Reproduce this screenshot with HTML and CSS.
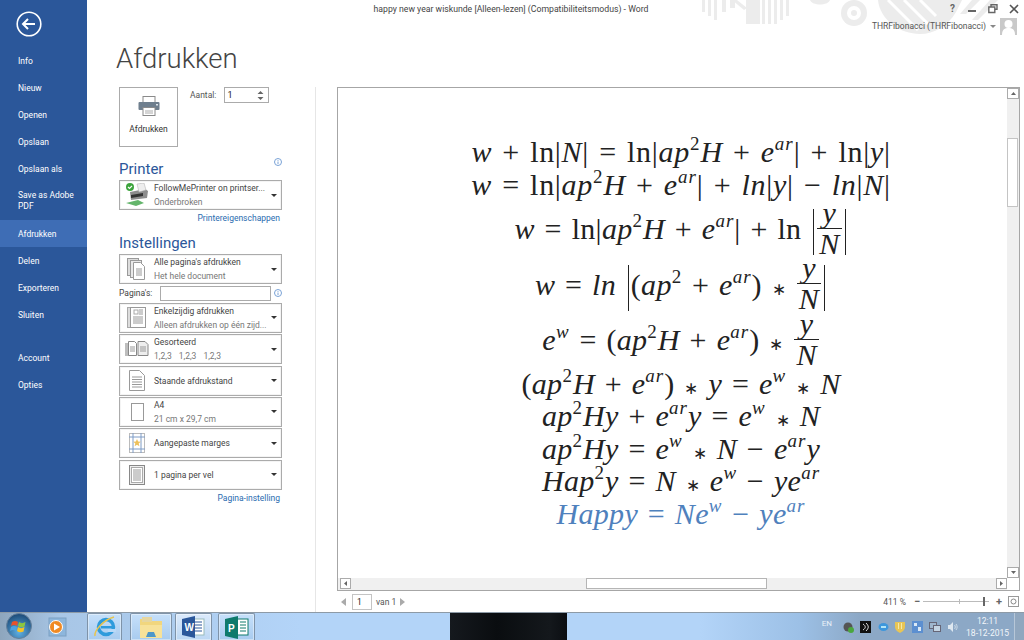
FILE: index.html
```html
<!DOCTYPE html>
<html lang="nl">
<head>
<meta charset="utf-8">
<title>happy new year wiskunde</title>
<link rel="stylesheet" href="styles.css">
</head>
<body>
<div class="window">
  <header class="titlebar">
    <svg class="decor" width="324" height="45" viewBox="0 0 324 45">
      <g fill="#ececec">
        <rect x="2" y="0" width="3" height="12"/><rect x="8" y="0" width="3" height="16"/><rect x="14" y="0" width="3" height="20"/>
        <rect x="22" y="0" width="4" height="12"/><rect x="30" y="0" width="5" height="8"/>
        <path d="M32 0h5l10 8-3 2z"/>
        <rect x="46" y="0" width="14" height="24"/><rect x="62" y="0" width="3" height="24"/><rect x="68" y="0" width="3" height="24"/><rect x="74" y="0" width="3" height="24"/><rect x="80" y="0" width="3" height="20"/><rect x="86" y="0" width="3" height="16"/>
        <path d="M110 0h20c-2 6-18 6-20 0z"/>
        <circle cx="154" cy="13" r="13"/>
        <path d="M178 0h84l-6 12c-8 14-22 22-36 22-20 0-40-14-42-34z"/>
        <path d="M272 0h8l-14 14h-6zM290 0h8l-20 20h-6z"/>
      </g>
      <circle cx="154" cy="13" r="7" fill="#fff"/><circle cx="154" cy="13" r="3" fill="#ececec"/>
      <path d="M188 0l30 30M204 0l24 24M220 0l16 16" stroke="#fff" stroke-width="3"/>
    </svg>
    <div class="doc-title">happy new year wiskunde [Alleen-lezen] (Compatibiliteitsmodus) - Word</div>
    <div class="win-controls">
      <span class="help">?</span>
      <svg width="10" height="10" viewBox="0 0 10 10"><rect x="1" y="6" width="8" height="2" fill="#666"/></svg>
      <svg width="10" height="10" viewBox="0 0 10 10"><path d="M3 2.500V.8h6v4.500H7.500M.8 3h6v5.500h-6z" fill="none" stroke="#666" stroke-width="1.400"/></svg>
      <svg width="10" height="10" viewBox="0 0 10 10"><path d="M1 1l8 8M9 1l-8 8" stroke="#555" stroke-width="1.600"/></svg>
    </div>
    <div class="account">
      <span>THRFibonacci (THRFibonacci)</span>
      <svg width="6" height="4" viewBox="0 0 6 4"><path d="M0 0h6L3 3z" fill="#888"/></svg>
      <svg width="17" height="17" viewBox="0 0 17 17"><rect width="17" height="17" fill="#c9c9c9"/><circle cx="8.500" cy="6" r="4" fill="#fff"/><path d="M2 17c0-6 3-7 6.500-7s6.500 1 6.500 7z" fill="#fff"/></svg>
    </div>
  </header>

  <div class="workarea">
    <nav class="sidebar">
      <svg class="back" width="26" height="26" viewBox="0 0 26 26"><circle cx="13" cy="13" r="11.800" fill="none" stroke="#fff" stroke-width="1.600"/><path d="M7 13h12M12 8l-5 5 5 5" fill="none" stroke="#fff" stroke-width="2"/></svg>
      <a class="nav-item">Info</a>
      <a class="nav-item">Nieuw</a>
      <a class="nav-item">Openen</a>
      <a class="nav-item">Opslaan</a>
      <a class="nav-item">Opslaan als</a>
      <a class="nav-item nav-double">Save as Adobe<br>PDF</a>
      <a class="nav-item nav-active">Afdrukken</a>
      <a class="nav-item">Delen</a>
      <a class="nav-item">Exporteren</a>
      <a class="nav-item">Sluiten</a>
      <a class="nav-item nav-gap">Account</a>
      <a class="nav-item">Opties</a>
    </nav>

    <main class="backstage">
      <h1 class="page-title">Afdrukken</h1>
      <div class="print-view">
        <section class="settings">
          <div class="print-top">
            <button class="print-btn">
              <svg width="22" height="20" viewBox="0 0 22 20"><rect x="5" y="0.500" width="12" height="7" fill="#fff" stroke="#8a8a8a"/><rect x="0.500" y="6" width="21" height="8" rx="1" fill="#6f7f8e"/><rect x="5" y="11.500" width="12" height="8" fill="#fff" stroke="#8a8a8a"/><path d="M7 15h8M7 17h8" stroke="#aaa"/><rect x="18" y="8" width="2" height="1.500" fill="#dfe6ec"/></svg>
              <span>Afdrukken</span>
            </button>
            <label class="copies">Aantal:
              <span class="spin"><span>1</span><svg width="7" height="11" viewBox="0 0 7 11"><path d="M0.500 4L3.500 1l3 3zM0.500 7l3 3 3-3z" fill="#666"/></svg></span>
            </label>
          </div>

          <div class="section-head"><h2>Printer</h2>
            <svg class="info info-head" width="8" height="8" viewBox="0 0 8 8"><circle cx="4" cy="4" r="3.500" fill="none" stroke="#7aa2d6"/><path d="M4 2v.8M4 3.500V6" stroke="#7aa2d6"/></svg>
          </div>
          <div class="dropdown">
            <span class="dd-icon">
              <svg width="24" height="24" viewBox="0 0 24 24"><path d="M5 9l15-3 3 2-1 7-16 2z" fill="#8d8d8d"/><path d="M12 1l7-1 2 7-7 2z" fill="#eee" stroke="#aaa" stroke-width=".5"/><path d="M6 12l12-2v3L6 15z" fill="#333"/><path d="M1 20l12-3 6 3-8 3z" fill="#63b56b"/><circle cx="5" cy="4" r="4" fill="#3da43d"/><path d="M3 4l1.500 1.500L7 2.800" fill="none" stroke="#fff" stroke-width="1.200"/></svg>
            </span>
            <span class="dd-text"><span class="dd-main">FollowMePrinter on printser...</span><span class="dd-sub">Onderbroken</span></span>
            <span class="caret"></span>
          </div>
          <a class="link">Printereigenschappen</a>

          <h2 class="settings-head">Instellingen</h2>
          <div class="dd-stack">
            <div class="dropdown">
              <span class="dd-icon"><svg width="20" height="22" viewBox="0 0 20 22"><g fill="#fff" stroke="#9a9a9a"><rect x=".5" y=".5" width="11" height="17" fill="#ddd"/><rect x="3.500" y="2.500" width="11" height="17" fill="#e9e9e9"/><path d="M6.500 4.500h7l4 4v13h-11z"/></g><path d="M9 11h6M9 13h6M9 15h6M9 17h6" stroke="#999"/></svg></span>
              <span class="dd-text"><span class="dd-main">Alle pagina's afdrukken</span><span class="dd-sub">Het hele document</span></span>
              <span class="caret"></span>
            </div>
            <div class="pages-row">
              <label>Pagina's:</label><span class="pages-input"></span>
              <svg class="info" width="8" height="8" viewBox="0 0 8 8"><circle cx="4" cy="4" r="3.500" fill="none" stroke="#7aa2d6"/><path d="M4 2v.8M4 3.500V6" stroke="#7aa2d6"/></svg>
            </div>
            <div class="dropdown">
              <span class="dd-icon"><svg width="20" height="22" viewBox="0 0 20 22"><rect x=".5" y=".5" width="3" height="20" fill="#ddd" stroke="#aaa"/><rect x="3.500" y=".5" width="15" height="20" fill="#fff" stroke="#999"/><rect x="7" y="3" width="4" height="4" fill="none" stroke="#aaa"/><path d="M12 3h4M12 5h4M12 7h4M6 10h10M6 12h10M6 14h10M6 16h10" stroke="#999"/></svg></span>
              <span class="dd-text"><span class="dd-main">Enkelzijdig afdrukken</span><span class="dd-sub">Alleen afdrukken op één zijd...</span></span>
              <span class="caret"></span>
            </div>
            <div class="dropdown">
              <span class="dd-icon"><svg width="24" height="16" viewBox="0 0 24 16"><path d="M0 2h9v13H0z" fill="#bdbdbd"/><g fill="#fff" stroke="#888"><path d="M3.500 .5h6l2 2v12h-8z"/><path d="M13 .5h7l3 3v11H13z" fill="#eee"/></g><path d="M5 6h5M5 8h5M5 10h5M15 6h6M15 8h6M15 10h6" stroke="#999"/></svg></span>
              <span class="dd-text"><span class="dd-main">Gesorteerd</span><span class="dd-sub dd-collate"><span>1,2,3</span><span>1,2,3</span><span>1,2,3</span></span></span>
              <span class="caret"></span>
            </div>
            <div class="dropdown">
              <span class="dd-icon"><svg width="16" height="21" viewBox="0 0 16 21"><path d="M.5 .5h10l5 5v15H.5z" fill="#fff" stroke="#999"/><path d="M3 7h10M3 9.500h10M3 12h10M3 14.500h10M3 17h10" stroke="#999"/></svg></span>
              <span class="dd-text"><span class="dd-main">Staande afdrukstand</span></span>
              <span class="caret"></span>
            </div>
            <div class="dropdown">
              <span class="dd-icon"><svg width="13" height="18" viewBox="0 0 13 18"><rect x=".5" y=".5" width="12" height="17" fill="#fff" stroke="#999"/></svg></span>
              <span class="dd-text"><span class="dd-main">A4</span><span class="dd-sub">21 cm x 29,7 cm</span></span>
              <span class="caret"></span>
            </div>
            <div class="dropdown">
              <span class="dd-icon"><svg width="16" height="20" viewBox="0 0 16 20"><rect x=".5" y=".5" width="15" height="19" fill="#fff" stroke="#bbb"/><path d="M4 0v20M12 0v20M0 4h16M0 16h16" stroke="#7e9cc6"/><path d="M8 6l1.100 2.600 2.700.2-2.100 1.800.7 2.700L8 11.800l-2.400 1.500.7-2.700-2.100-1.800 2.700-.2z" fill="#eec15c"/></svg></span>
              <span class="dd-text"><span class="dd-main">Aangepaste marges</span></span>
              <span class="caret"></span>
            </div>
            <div class="dropdown">
              <span class="dd-icon"><svg width="16" height="20" viewBox="0 0 16 20"><rect x=".5" y=".5" width="15" height="19" fill="#eee" stroke="#888"/><rect x="2.500" y="2.500" width="11" height="15" fill="#fff" stroke="#aaa"/><path d="M4 5h8M4 7h8M4 9h8M4 11h8M4 13h8M4 15h8" stroke="#999"/></svg></span>
              <span class="dd-text"><span class="dd-main">1 pagina per vel</span></span>
              <span class="caret"></span>
            </div>
          </div>
          <a class="link">Pagina-instelling</a>
        </section>

        <section class="preview">
          <div class="panel">
            <div class="page">
              <div class="eq eq-wide"><i>w</i> + ln|<i>N</i>| = ln|<i>ap</i><sup>2</sup><i>H</i> + <i>e<sup>ar</sup></i>| + ln|<i>y</i>|</div>
              <div class="eq eq-wide"><i>w</i> = ln|<i>ap</i><sup>2</sup><i>H</i> + <i>e<sup>ar</sup></i>| + <i>ln</i>|<i>y</i>| − <i>ln</i>|<i>N</i>|</div>
              <div class="eq eq-tall"><i>w</i> = ln|<i>ap</i><sup>2</sup><i>H</i> + <i>e<sup>ar</sup></i>| + ln <span class="tall-bar"></span><span class="frac"><i>y</i><i class="den">N</i></span><span class="tall-bar"></span></div>
              <div class="eq eq-tall"><i>w</i> = <i>ln</i> <span class="tall-bar"></span>(<i>ap</i><sup>2</sup> + <i>e<sup>ar</sup></i>) <span class="star">∗</span> <span class="frac"><i>y</i><i class="den">N</i></span><span class="tall-bar"></span></div>
              <div class="eq eq-tall"><i>e<sup>w</sup></i> = (<i>ap</i><sup>2</sup><i>H</i> + <i>e<sup>ar</sup></i>) <span class="star">∗</span> <span class="frac"><i>y</i><i class="den">N</i></span></div>
              <div class="eq">(<i>ap</i><sup>2</sup><i>H</i> + <i>e<sup>ar</sup></i>) <span class="star">∗</span> <i>y</i> = <i>e<sup>w</sup></i> <span class="star">∗</span> <i>N</i></div>
              <div class="eq"><i>ap</i><sup>2</sup><i>Hy</i> + <i>e<sup>ar</sup>y</i> = <i>e<sup>w</sup></i> <span class="star">∗</span> <i>N</i></div>
              <div class="eq"><i>ap</i><sup>2</sup><i>Hy</i> = <i>e<sup>w</sup></i> <span class="star">∗</span> <i>N</i> − <i>e<sup>ar</sup>y</i></div>
              <div class="eq"><i>Hap</i><sup>2</sup><i>y</i> = <i>N</i> <span class="star">∗</span> <i>e<sup>w</sup></i> − <i>ye<sup>ar</sup></i></div>
              <div class="eq eq-blue"><i>Happy</i> = <i>Ne<sup>w</sup></i> − <i>ye<sup>ar</sup></i></div>
            </div>
            <div class="vscroll">
              <span class="sb-btn"><svg width="5" height="3" viewBox="0 0 5 3"><path d="M0 3L2.500 0 5 3z" fill="#666"/></svg></span>
              <span class="vtrack"><span class="vthumb"></span></span>
              <span class="sb-btn"><svg width="5" height="3" viewBox="0 0 5 3"><path d="M0 0l2.500 3L5 0z" fill="#666"/></svg></span>
            </div>
            <div class="hscroll">
              <span class="sb-btn"><svg width="3" height="5" viewBox="0 0 3 5"><path d="M3 0L0 2.500 3 5z" fill="#666"/></svg></span>
              <span class="htrack"><span class="hthumb"></span></span>
              <span class="sb-btn"><svg width="3" height="5" viewBox="0 0 3 5"><path d="M0 0l3 2.500L0 5z" fill="#666"/></svg></span>
            </div>
          </div>
          <div class="statusbar">
            <div class="pager">
              <svg width="5" height="8" viewBox="0 0 5 8"><path d="M5 0L0 4l5 4z" fill="#aaa"/></svg>
              <span class="page-box">1</span><span>van 1</span>
              <svg width="5" height="8" viewBox="0 0 5 8"><path d="M0 0l5 4-5 4z" fill="#aaa"/></svg>
            </div>
            <div class="zoom">
              <span class="zoom-pct">411 %</span>
              <span class="zoom-op">−</span>
              <span class="slider"><span class="mid-tick"></span><span class="knob"></span></span>
              <span class="zoom-op zoom-plus">+</span>
              <svg class="zoom-fit" width="11" height="11" viewBox="0 0 11 11"><rect x=".5" y=".5" width="10" height="10" fill="#fff" stroke="#999"/><circle cx="5.500" cy="5.500" r="2.500" fill="none" stroke="#888"/></svg>
            </div>
          </div>
        </section>
      </div>
    </main>
  </div>

  <footer class="taskbar">
    <svg class="orb" width="26" height="26" viewBox="0 0 26 26">
      <defs><radialGradient id="orbfill" cx=".5" cy=".75" r=".7"><stop offset="0" stop-color="#5fb0e4"/><stop offset="1" stop-color="#1f4f7d"/></radialGradient></defs>
      <circle cx="13" cy="13" r="12.500" fill="url(#orbfill)" stroke="#66809a"/>
      <path d="M6 9c2-1.500 4-1.500 6 0l-1 4c-2-1.500-4-1.500-6 0z" fill="#e8532b"/>
      <path d="M13 9c2 1.500 4 1.500 6.500 0l-1 4.500c-2 1-4.500 1-6.500-.5z" fill="#8cc63f"/>
      <path d="M5 14c2-1.500 4-1.500 6 0l-1 4c-2-1.500-4-1.500-6 0z" fill="#4ba3e3"/>
      <path d="M12 14c2 1.500 4 1.500 6.500 0l-1 4.500c-2 1-4.500 1-6.500-.5z" fill="#f7c325"/>
    </svg>
    <svg class="tb-media" width="19" height="20" viewBox="0 0 19 20"><rect x="1" y="1" width="17" height="18" fill="#8db6dc" stroke="#7da0c2"/><circle cx="8" cy="10" r="6.500" fill="#f08a24" stroke="#fff"/><path d="M6 6.500l6 3.500-6 3.500z" fill="#fff"/></svg>
    <div class="tb-btn tb-ie">
      <svg width="24" height="24" viewBox="0 0 24 24"><circle cx="13" cy="12" r="7.500" fill="none" stroke="#2f9bdc" stroke-width="3.500"/><rect x="8" y="11" width="11" height="2.500" fill="#2f9bdc"/><rect x="15" y="14" width="8" height="3" fill="#b9d9f7"/><path d="M2 21C1 16 10 5 21 2" fill="none" stroke="#e8c44a" stroke-width="1.500"/></svg>
    </div>
    <div class="tb-btn tb-explorer">
      <svg width="24" height="23" viewBox="0 0 24 23"><path d="M1 3h8l2 2h12v16H1z" fill="#f1d67e"/><rect x="3" y="1" width="10" height="5" fill="#e6d6a0"/><rect x="1" y="9" width="22" height="13" fill="#f7e29a"/><path d="M7 21l2-5h6l2 5z" fill="#4d97c9"/></svg>
    </div>
    <div class="tb-btn tb-word">
      <svg width="23" height="22" viewBox="0 0 23 22"><rect x="9" y="3" width="13" height="16" fill="#fff" stroke="#9bb"/><path d="M12 6h8M12 9h8M12 12h8M12 15h8" stroke="#2b579a"/><path d="M0 3l13-3v22L0 19z" fill="#2b579a"/><text x="2.500" y="14.500" class="tb-letter">W</text></svg>
    </div>
    <div class="tb-btn tb-pub">
      <svg width="24" height="23" viewBox="0 0 24 23"><rect x="12" y="3" width="11" height="16" fill="#fff" stroke="#0f7a6c"/><path d="M15 6h6M15 9h6M15 12h6M15 15h6" stroke="#0f7a6c"/><path d="M0 3l13-3v23L0 20z" fill="#0f7a6c"/><text x="3" y="15.500" class="tb-letter">P</text></svg>
    </div>
    <div class="tb-dark"></div>
    <div class="tray">
      <span class="lang">EN</span>
      <svg width="11" height="12" viewBox="0 0 11 12"><circle cx="5" cy="6" r="4.500" fill="#555"/><circle cx="8" cy="9" r="3" fill="#4aa63e"/></svg>
      <svg width="11" height="12" viewBox="0 0 11 12"><rect width="11" height="12" fill="#111"/><path d="M3 3c3 2 3 4 0 6M6 2c3 3 3 5 0 8" fill="none" stroke="#ddd"/></svg>
      <svg width="11" height="10" viewBox="0 0 11 10"><ellipse cx="5.500" cy="5" rx="5" ry="4" fill="#3d97dc"/><path d="M3 5h5" stroke="#dff" stroke-width="1.500"/></svg>
      <svg width="10" height="12" viewBox="0 0 10 12"><path d="M0 1h10v5c0 3-3 5-5 6-2-1-5-3-5-6z" fill="#e8c556"/><path d="M3.500 2v6M6.500 2v6" stroke="#f5e9a8"/></svg>
      <svg width="11" height="12" viewBox="0 0 11 12"><rect width="11" height="12" fill="#5c8fd0"/><path d="M2 2h3v3H2zM6 6h3v4H6z" fill="#dbe9f7"/></svg>
      <svg width="12" height="10" viewBox="0 0 12 10"><rect x=".5" y=".5" width="7" height="6" fill="#9fb6cd" stroke="#667"/><rect x="4.500" y="3.500" width="7" height="6" fill="#c4d4e3" stroke="#667"/></svg>
      <svg width="10" height="10" viewBox="0 0 10 10"><path d="M0 3h2l3-3v10L2 7H0z" fill="#dde7f0"/><path d="M6.500 3c1 1 1 3 0 4M8 2c1.500 2 1.500 4 0 6" fill="none" stroke="#dde7f0" stroke-width=".8"/></svg>
      <div class="clock"><span>12:11</span><span>18-12-2015</span></div>
      <span class="show-desktop"></span>
    </div>
  </footer>
</div>
</body>
</html>
```

FILE: styles.css
```css
* { box-sizing: border-box; }
html, body { margin: 0; padding: 0; }
body { width: 1024px; height: 640px; overflow: hidden; background: #fff; font-family: Roboto, "Liberation Sans", sans-serif; font-size: 8.500px; color: #444; }
.window { position: relative; width: 1024px; height: 640px; display: flex; flex-direction: column; }

/* title bar overlay */
.titlebar { position: absolute; inset: 0 0 auto 0; height: 45px; z-index: 2; pointer-events: none; }
.decor { position: absolute; top: 0; left: 700px; }
.doc-title { position: absolute; top: 3px; left: 0; width: 1022px; text-align: center; font-size: 8.700px; line-height: 12px; color: #444; }
.win-controls { position: absolute; top: 3px; right: 5px; display: flex; align-items: center; gap: 11px; height: 11px; }
.help { font-size: 10px; font-weight: 700; color: #666; margin-right: 1px; }
.account { position: absolute; top: 18px; right: 7px; display: flex; align-items: center; gap: 4px; font-size: 8.500px; line-height: 17px; color: #555; }

/* sidebar */
.workarea { flex: 0 0 612px; display: flex; min-height: 0; }
.sidebar { flex: 0 0 87px; background: #2b579a; color: #fff; padding-top: 11px; display: flex; flex-direction: column; }
.back { display: block; margin: 0 0 10px 16px; }
.nav-item { display: block; height: 27px; line-height: 28px; padding-left: 18px; font-size: 8.500px; color: #fff; }
.nav-double { height: 38px; line-height: 11px; padding-top: 8px; }
.nav-active { background: #3e6db5; }
.nav-gap { margin-top: 16px; }

/* backstage */
.backstage { flex: 1; min-width: 0; display: flex; flex-direction: column; }
.page-title { margin: 0; padding: 39px 0 0 29px; height: 87px; font-size: 27.500px; font-weight: 300; line-height: 40px; color: #444; }
.print-view { flex: 1; min-height: 0; display: flex; }
.settings { flex: 0 0 229px; min-width: 0; padding: 0 33px 0 32px; border-right: 1px solid #e6e6e6; display: flex; flex-direction: column; }
.print-top { display: flex; gap: 12px; height: 60px; }
.print-btn { width: 59px; height: 60px; padding: 8px 0 0; background: #fff; border: 1px solid #ababab; display: flex; flex-direction: column; align-items: center; gap: 8px; font: inherit; color: #333; }
.copies { display: flex; align-items: flex-start; gap: 8px; line-height: 16px; color: #555; }
.spin { width: 45px; height: 16px; border: 1px solid #ababab; padding: 0 4px 0 2px; display: flex; justify-content: space-between; align-items: center; color: #222; font-size: 9px; }
.section-head { position: relative; height: 33px; padding-top: 13px; }
.section-head h2, .settings-head { margin: 0; font-size: 15px; font-weight: 400; line-height: 19px; color: #2b579a; }
.info-head { position: absolute; top: 11px; right: 0; }
.settings-head { margin-top: 8px; height: 22px; line-height: 23px; }
.dd-stack { display: flex; flex-direction: column; gap: 1.400px; }
.dropdown { height: 30px; flex: none; border: 1px solid #ababab; display: flex; align-items: center; background: #fff; box-shadow: inset 0 0 0 1px #f4f4f4; }
.dd-icon { flex: 0 0 34px; display: flex; justify-content: center; align-items: center; }
.dd-text { flex: 1; min-width: 0; display: flex; flex-direction: column; gap: 3px; padding-top: 1px; line-height: 11px; white-space: nowrap; color: #444; }
.dd-sub { color: #777; }
.dd-collate { display: flex; gap: 7px; }
.caret { flex: none; width: 0; height: 0; border: 3px solid transparent; border-top: 3px solid #333; border-bottom: 0; margin: 0 4px 0 0; }
.link { display: block; text-align: right; color: #2b6cb0; padding: 3px 2px 0 0; line-height: 11px; }
.pages-row { display: flex; align-items: center; height: 16px; color: #444; }
.pages-row label { width: 41px; }
.pages-input { width: 111px; height: 15px; border: 1px solid #ababab; }
.pages-row .info { margin-left: 3px; }

/* preview */
.preview { flex: 1; min-width: 0; padding-left: 21px; padding-right: 4px; display: flex; flex-direction: column; }
.panel { flex: 0 0 504px; border: 1px solid #a6a6a6; display: grid; grid-template-columns: 1fr 12px; grid-template-rows: 1fr 12px; background: #fff; min-width: 0; }
.page { padding: 48px 0 0 17px; min-width: 0; overflow: hidden; }
.eq { height: 32.500px; line-height: 32.500px; text-align: center; white-space: pre; font-family: "Liberation Serif", serif; font-size: 30px; letter-spacing: .3px; color: #222; word-spacing: 2px; }
.eq-wide { letter-spacing: .7px; }
.eq-tall { height: 55.500px; line-height: 55.500px; }
.eq-blue { color: #4f81bd; }
.eq sup { font-size: 19px; line-height: 0; vertical-align: 12px; letter-spacing: 1px; }
.star { font-size: 17px; line-height: 0; }
.frac { display: inline-flex; flex-direction: column; align-items: center; line-height: 30px; margin: -8px 1px 0; vertical-align: middle; }
.frac .den { border-top: 1.500px solid #222; padding: 0 2px; }
.tall-bar { display: inline-block; width: 0; height: 46px; border-left: 1.500px solid #222; margin: 0 2px; vertical-align: middle; }
.vscroll { display: flex; flex-direction: column; grid-row: 1; grid-column: 2; background: #f0f0f0; }
.hscroll { display: flex; grid-row: 2; grid-column: 1; background: #f0f0f0; padding-left: 2px; }
.sb-btn { flex: 0 0 11px; height: 11px; border: 1px solid #ababab; background: #fff; display: flex; align-items: center; justify-content: center; }
.vtrack { flex: 1; }
.vthumb { display: block; width: 11px; height: 69px; margin-top: 39px; background: #fff; border: 1px solid #c4c4c4; }
.htrack { flex: 1; }
.hthumb { display: block; width: 181px; height: 11px; margin-left: 235px; background: #fff; border: 1px solid #b5b5b5; }
.statusbar { flex: 1; display: flex; justify-content: space-between; align-items: center; padding: 0 1px 0 4px; color: #555; }
.pager { display: flex; align-items: center; gap: 4px; }
.page-box { width: 20px; height: 16px; border: 1px solid #c4c4c4; line-height: 15px; padding-left: 4px; color: #222; margin-left: 2px; }
.zoom { display: flex; align-items: center; gap: 3px; }
.zoom-pct { margin-right: 5px; }
.zoom-op { font-size: 11px; font-weight: 700; color: #666; line-height: 11px; }
.zoom-plus { margin-left: 4px; }
.zoom-fit { margin-left: 3px; }
.slider { position: relative; width: 66px; height: 1px; background: #bbb; }
.mid-tick { position: absolute; left: 36px; top: -2px; width: 1px; height: 5px; background: #bbb; }
.knob { position: absolute; left: 60px; top: -4px; width: 2px; height: 9px; background: #666; }

/* taskbar */
.taskbar { flex: 1; position: relative; display: flex; align-items: flex-end; border-top: 1px solid #8d9aa6; background: linear-gradient(90deg, #8ea6bd 0, #a8c6e6 60px, #b3d4f8 300px, #b3d4f8 700px, #9cc0e6 800px, #8ca8c6 860px, #8ca8c6 100%); }
.orb { flex: none; margin: 0 0 1px 6px; }
.tb-media { flex: none; margin: 0 0 3px 16px; }
.tb-btn { flex: none; height: 27px; display: flex; align-items: center; justify-content: center; border: 1px solid #7f93a8; border-bottom: 0; border-radius: 2px 2px 0 0; background: linear-gradient(#c6e0fa, #a8cbef); box-shadow: inset 0 0 0 1px rgba(255,255,255,.4); }
.tb-ie { width: 35px; margin-left: 20px; }
.tb-explorer { width: 42px; margin-left: 8px; }
.tb-word { width: 37px; margin-left: 3px; background: linear-gradient(#dbeafb, #bcd7f3); }
.tb-pub { width: 37px; margin-left: 6px; }
.tb-letter { font-family: "Liberation Sans", sans-serif; font-size: 10px; font-weight: 700; fill: #fff; }
.tb-dark { flex: none; width: 117px; height: 27px; margin-left: 195px; background: linear-gradient(90deg, #15191e, #0a0d10 40%, #14181c 85%, #0b0e12); }
.tray { margin-left: auto; height: 27px; display: flex; align-items: center; gap: 6.500px; color: #eaf1f8; }
.lang { font-size: 8px; margin-right: 4px; position: relative; top: -3px; }
.clock { display: flex; flex-direction: column; align-items: center; font-size: 8.500px; line-height: 12px; margin-left: 2px; color: #f2f6fa; }
.show-desktop { width: 10px; height: 27px; margin-left: -1.500px; background: #90a7bf; border-left: 1px solid #b7c7d8; }
```
